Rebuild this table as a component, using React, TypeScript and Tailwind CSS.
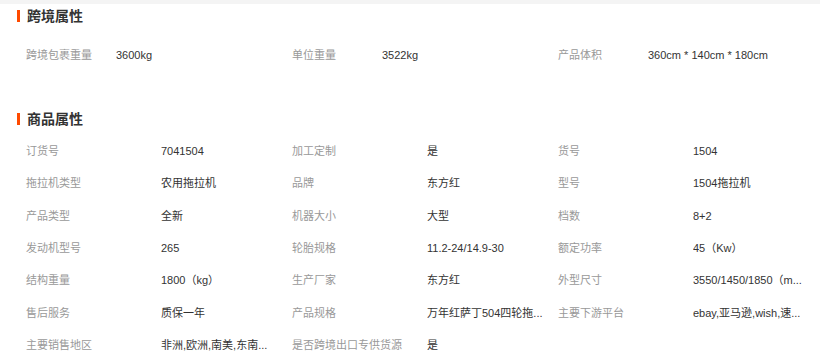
import React from "react";

type Cell = [string, string];

const cross: Cell[] = [
  ["跨境包裹重量", "3600kg"],
  ["单位重量", "3522kg"],
  ["产品体积", "360cm * 140cm * 180cm"],
];

const goods: Cell[] = [
  ["订货号", "7041504"],
  ["加工定制", "是"],
  ["货号", "1504"],
  ["拖拉机类型", "农用拖拉机"],
  ["品牌", "东方红"],
  ["型号", "1504拖拉机"],
  ["产品类型", "全新"],
  ["机器大小", "大型"],
  ["档数", "8+2"],
  ["发动机型号", "265"],
  ["轮胎规格", "11.2-24/14.9-30"],
  ["额定功率", "45（Kw）"],
  ["结构重量", "1800（kg）"],
  ["生产厂家", "东方红"],
  ["外型尺寸", "3550/1450/1850（m..."],
  ["售后服务", "质保一年"],
  ["产品规格", "万年红萨丁504四轮拖..."],
  ["主要下游平台", "ebay,亚马逊,wish,速..."],
  ["主要销售地区", "非洲,欧洲,南美,东南..."],
  ["是否跨境出口专供货源", "是"],
];

function Title({ text }: { text: string }) {
  return (
    <div className="flex h-[24px] items-center pl-[17px]">
      <span className="h-[12px] w-[3px] bg-[#ff4a00]" />
      <span className="ml-[7px] text-[14px] font-bold leading-none text-[#333333]">{text}</span>
    </div>
  );
}

export default function App() {
  return (
    <div
      className="w-[820px] h-[363px] overflow-hidden bg-white"
      style={{ fontFamily: '"Liberation Sans", "Noto Sans CJK SC", sans-serif' }}
    >
      <div className="h-[4px] bg-[#f4f4f4]" />
      <Title text="跨境属性" />
      <div className="mt-[11px] grid grid-cols-[266px_266px_1fr] pl-[26px] text-[11px]">
        {cross.map(([k, v]) => (
          <div key={k} className="flex h-[32px] items-center">
            <span className="w-[90px] shrink-0 text-[#999999]">{k}</span>
            <span className="truncate text-[#333333]">{v}</span>
          </div>
        ))}
      </div>
      <div className="mt-[36px]">
        <Title text="商品属性" />
      </div>
      <div className="mt-[4px] grid grid-cols-[266px_266px_1fr] pl-[26px] text-[11px]">
        {goods.map(([k, v]) => (
          <div key={k} className="flex h-[32.33px] items-center">
            <span className="w-[135px] shrink-0 whitespace-nowrap text-[#999999]">{k}</span>
            <span className="w-[120px] truncate text-[#333333]">{v}</span>
          </div>
        ))}
      </div>
    </div>
  );
}
